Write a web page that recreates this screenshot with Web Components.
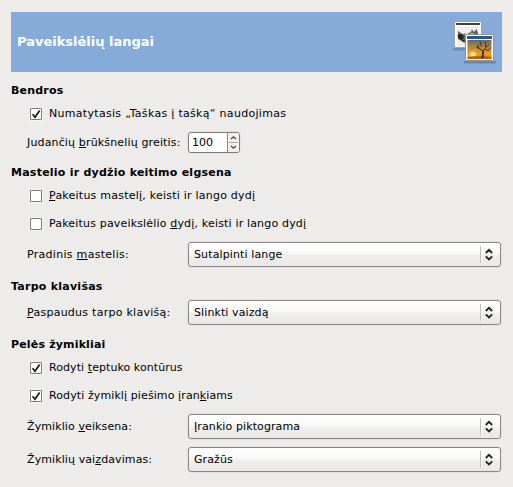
<!DOCTYPE html>
<html lang="lt"><head><meta charset="utf-8"><title>Paveikslėlių langai</title>
<style>
body{margin:0;background:#edeceb;color:#000;font:11px/16px "DejaVu Sans",sans-serif;width:513px;height:487px;overflow:hidden}
u{text-decoration:underline;text-decoration-thickness:1px;text-underline-offset:1px;text-decoration-skip-ink:none}
</style></head><body>
<prefs-page>
<page-banner>Paveikslėlių langai</page-banner>
<pref-group heading="Bendros" style="--top:11px;--hs:.2px">
<check-row checked style="--gap:5px;--ls:.3px">Numatytasis „Taškas į tašką“ naudojimas</check-row>
<field-row style="--gap:10px;--h:21px;--ls:.15px">Judančių <u>b</u>rūkšnelių greitis:<spin-box slot="control">100</spin-box></field-row>
</pref-group>
<pref-group heading="Mastelio ir dydžio keitimo elgsena" style="--hs:.24px">
<check-row style="--gap:5px;--ls:.23px"><u>P</u>akeitus mastelį, keisti ir lango dydį</check-row>
<check-row style="--gap:10px;--ls:.17px">Pakeitus paveikslėlio <u>d</u>ydį, keisti ir lango dydį</check-row>
<field-row style="--gap:10px;--ls:.29px">Pradinis <u>m</u>astelis:<combo-box slot="control" style="--ls:.12px">Sutalpinti lange</combo-box></field-row>
</pref-group>
<pref-group heading="Tarpo klavišas" style="--hs:.25px">
<field-row style="--gap:5px;--ls:.26px"><u>P</u>aspaudus tarpo klavišą:<combo-box slot="control">Slinkti vaizdą</combo-box></field-row>
</pref-group>
<pref-group heading="Pelės žymikliai" style="--hs:.17px">
<check-row checked style="--gap:5px;--ls:.07px">Rodyti <u>t</u>eptuko kontūrus</check-row>
<check-row checked style="--gap:10px;--ls:.1px">Rodyti žymiklį piešimo įran<u>k</u>iams</check-row>
<field-row style="--gap:10px;--ls:.1px">Žymiklio <u>v</u>eiksena:<combo-box slot="control">Įrankio piktograma</combo-box></field-row>
<field-row style="--gap:8px;--ls:.1px">Žymiklių vai<u>z</u>davimas:<combo-box slot="control">Gražūs</combo-box></field-row>
</pref-group>
</prefs-page>
<script>
const define=(name,html)=>customElements.define(name,class extends HTMLElement{
  constructor(){super();this.attachShadow({mode:'open'}).innerHTML=html;}
  connectedCallback(){
    const h=this.shadowRoot.querySelector('h2');
    if(h)h.textContent=this.getAttribute('heading');
  }
});
define('prefs-page',`<style>:host{display:flex;flex-direction:column;padding:12px 11px 0}</style><slot></slot>`);
define('page-banner',`<style>
:host{display:flex;align-items:center;justify-content:space-between;height:60px;box-sizing:border-box;padding:0 4px 0 6px;background:#86abd9;color:#fff;font-weight:bold;font-size:13px}
svg{display:block}</style><span><slot></slot></span>
<svg width="48" height="48" viewBox="0 0 48 48">
<defs><linearGradient id="sky" x1="0" y1="0" x2="0" y2="1"><stop offset="0" stop-color="#626967"/><stop offset=".4" stop-color="#b88a42"/><stop offset=".75" stop-color="#f49a22"/><stop offset="1" stop-color="#cf7411"/></linearGradient>
<radialGradient id="sun"><stop offset=".2" stop-color="#fff7a0"/><stop offset="1" stop-color="#ffb52c" stop-opacity="0"/></radialGradient></defs>
<rect x="3" y="30" width="30" height="2.5" rx="1" fill="#496a99" opacity=".45"/>
<rect x="4.5" y="3.5" width="27" height="26" rx="1.5" fill="#fcfcfb" stroke="#a3a29b"/>
<rect x="6" y="5" width="24" height="2" fill="#3e4143"/><rect x="7" y="9" width="22" height="19" fill="#eeeeec"/>
<path d="M8 13l4.500 3 5-1 3-.5 1.500-3 2 2.500 2.500-3 1.500 4 .5 5-3 4-5 1.500-7-1-3-2-2.500-2z" fill="#62635f"/>
<path d="M7.500 17.500q2-2.500 5-.5l1.500 2-2 3-3.500-1z" fill="#252725"/><circle cx="17" cy="17" r="2" fill="#f5f5ef"/><circle cx="22" cy="17.500" r="2.200" fill="#f5f5ef"/><circle cx="17.200" cy="17.300" r=".9"/><circle cx="21.700" cy="17.700" r=".9"/>
<path d="M12 22.500q5 2 9 0" stroke="#222" fill="none"/>
<rect x="14" y="43" width="32" height="2.500" rx="1" fill="#41618e" opacity=".5"/>
<rect x="15.500" y="16.500" width="28" height="26" rx="1.500" fill="#fff" stroke="#94938c"/>
<rect x="17" y="18" width="25" height="3" fill="#24579c"/><rect x="17.500" y="22" width="24" height="19" fill="url(#sky)"/>
<circle cx="23" cy="37" r="5.500" fill="url(#sun)"/><path d="M17.500 39q12-2 24 0v2h-24z" fill="#ad650f"/>
<path d="M32 40l1-7-4.500-3-.5-3.500m1 4l-3-1.500m7 4l3-4-1-5m1 5l3.500-2.500m-4.500 5l3.500 1 2-3m-9-1l-1.500-5" fill="none" stroke="#332614" stroke-width=".9"/><path d="M31.500 40.500l1.200-7.500 1.200.5-.5 7z" fill="#332614"/>
</svg>`);
define('pref-group',`<style>:host{display:flex;flex-direction:column;margin-top:var(--top,12px)}h2{margin:0;font:bold 11px/16px "DejaVu Sans",sans-serif;letter-spacing:var(--hs)}</style><h2></h2><slot></slot>`);
define('check-row',`<style>
:host{display:flex;align-items:center;height:18px;margin-top:var(--gap);padding-left:19px}
i{box-sizing:border-box;width:12px;height:12px;margin:2px 7px 0 0;background:#fff;border:1px solid #7b7a78;border-radius:1px;box-shadow:0 0 0 1px #f5f4f3}
span{padding-top:2px;letter-spacing:var(--ls)}
svg{display:none}:host([checked]) svg{display:block}
</style><i><svg width="10" height="10" viewBox="0 0 10 10"><path d="M1.6 5.2L4 8.2 8.6 1.4" fill="none" stroke="#1d1d1d" stroke-width="1.8"/></svg></i><span><slot></slot></span>`);
define('field-row',`<style>
:host{display:grid;grid-template-columns:161px 313px;align-items:center;height:var(--h,25px);margin-top:var(--gap);padding-left:16px}
span{letter-spacing:var(--ls)}
</style><span><slot></slot></span><slot name="control"></slot>`);
define('spin-box',`<style>
:host{display:flex;box-sizing:border-box;width:52px;height:21px;border:1px solid #7f7e7c;border-radius:3px;background:#fff;box-shadow:0 0 0 1px #e4e3e1;overflow:hidden}
span{flex:1;padding-left:3px;line-height:20px}
svg{display:block;background:#f1f0ef;border-left:1px solid #8d8c8a}
</style><span><slot></slot></span><svg width="11" height="19" viewBox="0 0 11 19"><path d="M1 9.5h9" stroke="#aaa9a7"/><path d="M3 6l2.5-2.3L8 6M3 13l2.5 2.3L8 13" fill="none" stroke="#444" stroke-width="1.2"/></svg>`);
define('combo-box',`<style>
:host{display:flex;align-items:center;box-sizing:border-box;height:25px;border:1px solid #888785;border-radius:3px;background:linear-gradient(#fff,#f8f8f7 48%,#f0efee 52%,#e9e8e6);box-shadow:0 0 0 1px #e4e3e1;--ls:.1px}
span{flex:1;padding-left:5px;letter-spacing:var(--ls)}
svg{display:block}
</style><span><slot></slot></span><svg width="20" height="23" viewBox="0 0 20 23"><path d="M.5 3v17" stroke="#bebdbb"/><path d="M1.5 3v17" stroke="#fff"/><path d="M5.8 10L9 6.8l3.2 3.200M5.800 13.300L9 16.500l3.200-3.200" fill="none" stroke="#222" stroke-width="1.800"/></svg>`);
</script></body></html>
